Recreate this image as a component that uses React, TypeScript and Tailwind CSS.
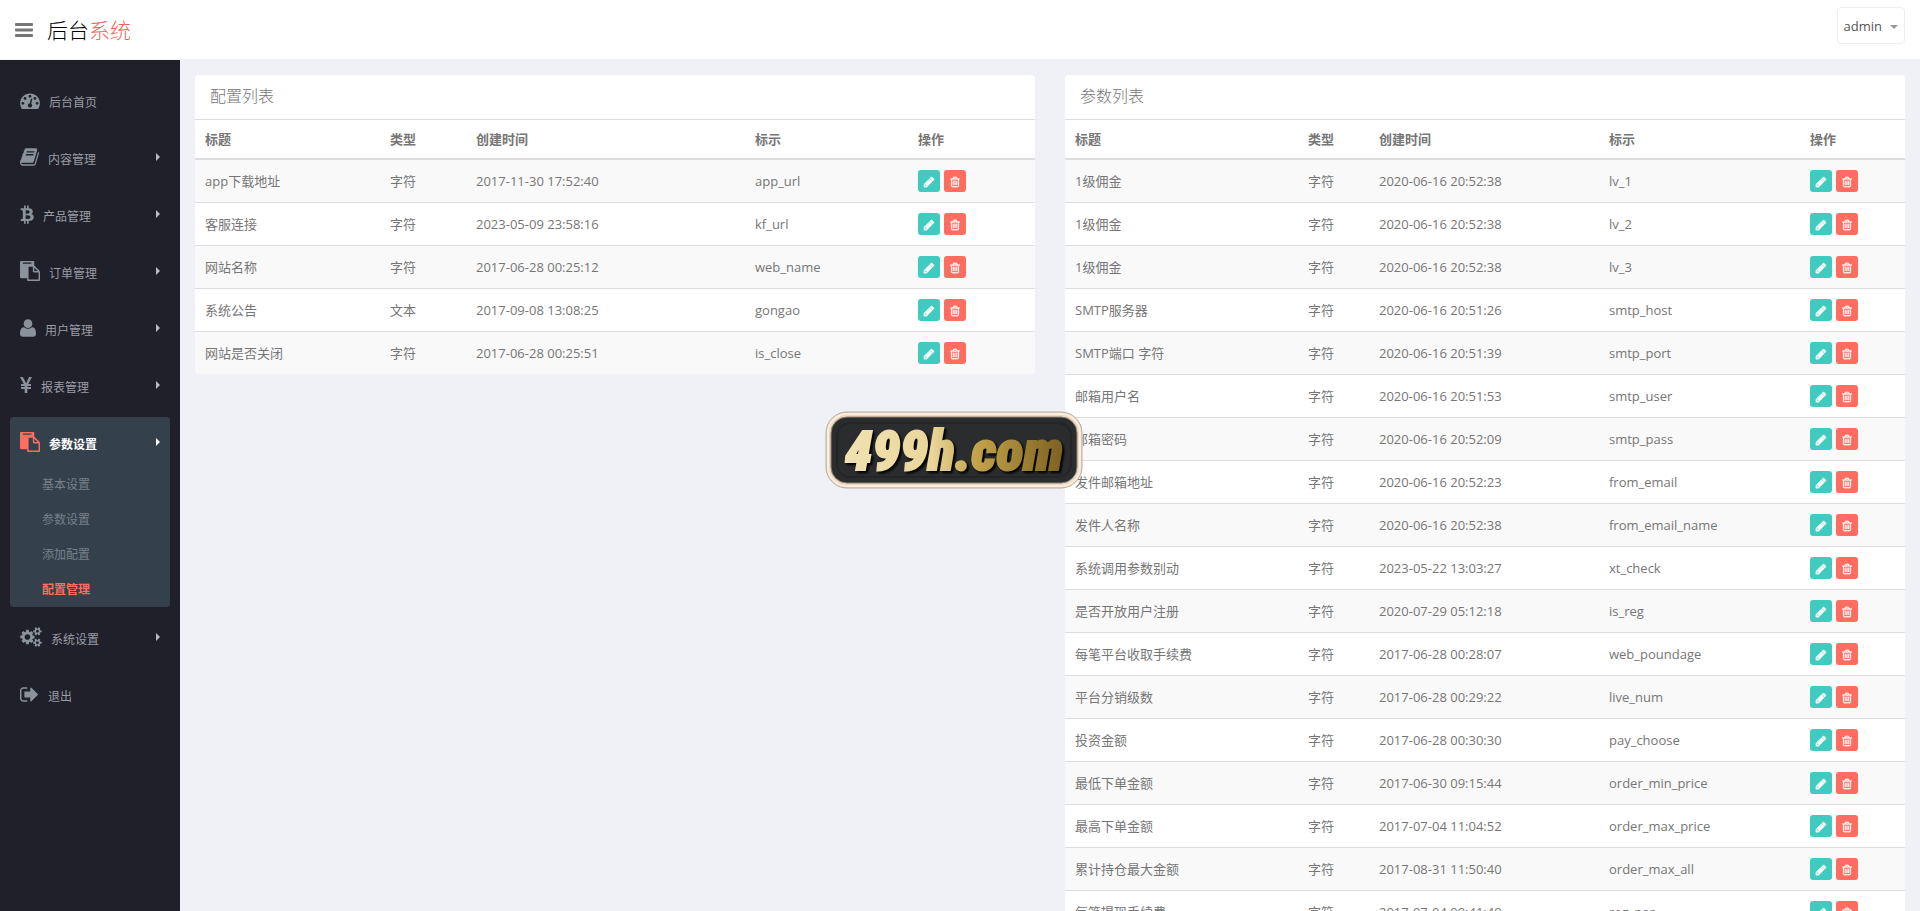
import clsx from 'clsx'

type IconDef = { box: string; path: string; size: string }

const icons: Record<string, IconDef> = {
  dashboard: {
    box: '0 128 1792 1536',
    size: 'h-[17px] w-5',
    path: 'M384 1152q0-53-37.5-90.5t-90.5-37.5-90.5 37.5-37.5 90.5 37.5 90.5 90.5 37.5 90.5-37.5 37.5-90.5zm192-448q0-53-37.5-90.5t-90.5-37.5-90.5 37.5-37.5 90.5 37.5 90.5 90.5 37.5 90.5-37.5 37.5-90.5zm428 481l101-382q6-26-7.5-48.5t-38.5-29.5-48 6.5-30 39.5l-101 382q-60 5-107 43.5t-63 98.5q-20 77 20 146t117 89 146-20 89-117q16-60-6-117t-72-91zm660-33q0-53-37.5-90.5t-90.5-37.5-90.5 37.5-37.5 90.5 37.5 90.5 90.5 37.5 90.5-37.5 37.5-90.5zm-640-640q0-53-37.5-90.5t-90.5-37.5-90.5 37.5-37.5 90.5 37.5 90.5 90.5 37.5 90.5-37.5 37.5-90.5zm448 192q0-53-37.5-90.5t-90.5-37.5-90.5 37.5-37.5 90.5 37.5 90.5 90.5 37.5 90.5-37.5 37.5-90.5zm320 448q0 261-141 483-19 29-54 29h-1402q-35 0-54-29-141-221-141-483 0-182 71-348t191-286 286-191 348-71 348 71 286 191 191 286 71 348z',
  },
  book: {
    box: '64 128 1664 1536',
    size: 'h-[18px] w-[19px]',
    path: 'M1703 478q40 57 18 129l-275 906q-19 64-76.5 107.5t-122.5 43.5h-923q-77 0-148.5-53.5t-99.5-131.5q-24-67-2-127 0-4 3-27t4-37q1-8-3-21.5t-3-19.5q2-11 8-21t16.5-23.5 16.5-23.5q23-38 45-91.5t30-91.5q3-10 .5-30t-.5-28q3-11 17-28t17-23q21-36 42-92t25-90q1-9-2.5-32t.5-28q4-13 22-30.5t22-22.5q19-26 42.5-84.5t27.5-96.5q1-8-3-25.5t-2-26.5q2-8 9-18t18-23 17-21q8-12 16.5-30.5t15-35 16-36 19.5-32 26.5-23.5 36-11.5 47.5 5.5l-1 3q38-9 51-9h761q74 0 114 56t18 130l-274 906q-36 119-71.5 153.5t-128.5 34.5h-869q-27 0-38 15-11 16-1 43 24 70 144 70h923q29 0 56-15.5t35-41.5l300-987q7-22 5-57 38 15 59 43zm-1064 2q-4 13 2 22.5t20 9.5h608q13 0 25.5-9.5t16.5-22.5l21-64q4-13-2-22.5t-20-9.5h-608q-13 0-25.5 9.5t-16.5 22.5zm-83 256q-4 13 2 22.5t20 9.5h608q13 0 25.5-9.5t16.5-22.5l21-64q4-13-2-22.5t-20-9.5h-608q-13 0-25.5 9.5t-16.5 22.5z',
  },
  btc: {
    box: '0 0 1280 1792',
    size: 'h-5 w-[14px]',
    path: 'M1167 640q18 182-131 258 117 28 175 103t45 214q-7 71-32.5 125t-64.5 89-97 58.5-121.5 34.5-145.5 15v255h-154v-251q-80 0-122-1v252h-154v-255q-18 0-54-.5t-55-.5h-200l31-183h111q50 0 58-51v-402h16q-6-1-16-1v-287q-13-68-89-68h-111v-164l212 1q64 0 97-1v-252h154v247q82-2 122-2v-245h154v252q79 7 140 22.5t113 45 82.5 78 36.5 114.5zm-215 545q0-36-15-64t-37-46-57.5-30.5-65.5-18.5-74-9-69-3-64.5 1-47.5 1v338q8 0 37 .5t48 .5 53-1.5 58.5-4 57-8.5 55.5-14 47.5-21 39.5-30 24.5-40 9.5-51zm-71-476q0-33-12.5-58.5t-30.5-42-48-28-55-16.5-61.5-8-58-2.5-54 1-39.5.5v307q5 0 34.5.5t46.5 0 50-2 55-5.5 51.5-11 48.5-18.5 37-27 27-38.5 9-51z',
  },
  paste: {
    box: '0 0 1792 1792',
    size: 'size-5',
    path: 'M768 1664h896v-640h-416q-40 0-68-28t-28-68v-416h-384v1152zm256-1440v-64q0-13-9.5-22.5t-22.5-9.5h-704q-13 0-22.5 9.5t-9.5 22.5v64q0 13 9.5 22.5t22.5 9.5h704q13 0 22.5-9.5t9.5-22.5zm256 672h299l-299-299v299zm512 128v672q0 40-28 68t-68 28h-960q-40 0-68-28t-28-68v-160h-544q-40 0-68-28t-28-68v-1344q0-40 28-68t68-28h1088q40 0 68 28t28 68v328q21 13 36 28l408 408q28 28 48 76t20 88z',
  },
  user: {
    box: '192 128 1408 1536',
    size: 'h-[18px] w-4',
    path: 'M1600 1405q0 120-73 189.5t-194 69.5h-874q-121 0-194-69.5t-73-189.5q0-53 3.5-103.5t14-109 26.5-108.5 43-97.5 62-81 85.5-53.5 111.5-20q9 0 42 21.5t74.5 48 108 48 133.5 21.5 133.5-21.5 108-48 74.5-48 42-21.5q61 0 111.5 20t85.5 53.5 62 81 43 97.5 26.5 108.5 14 109 3.5 103.5zm-320-893q0 159-112.5 271.5t-271.5 112.5-271.5-112.5-112.5-271.5 112.5-271.5 271.5-112.5 271.5 112.5 112.5 271.5z',
  },
  yen: {
    box: '0 0 1027 1408',
    size: 'h-4 w-3',
    path: 'M600 1408h-172q-13 0-22.5-9t-9.5-23v-330h-288q-13 0-22.5-9t-9.5-23v-103q0-13 9.5-22.5t22.5-9.5h288v-85h-288q-13 0-22.5-9t-9.5-23v-104q0-13 9.5-22.5t22.5-9.5h214l-321-578q-8-16 0-32 10-16 28-16h194q19 0 29 18l215 425q19 38 56 125 10-24 30.5-68t27.5-61l191-420q8-19 29-19h191q17 0 27 16 9 14 1 31l-313 579h215q13 0 22.5 9.5t9.5 22.5v104q0 14-9.5 23t-22.5 9h-290v85h290q13 0 22.5 9.5t9.5 22.5v103q0 14-9.5 23t-22.5 9h-290v330q0 13-9.5 22.5t-22.5 9.5z',
  },
  cogs: {
    box: '0 0 1920 1792',
    size: 'h-5 w-[22px]',
    path: 'M896 896q0-106-75-181t-181-75-181 75-75 181 75 181 181 75 181-75 75-181zm768 512q0-52-38-90t-90-38-90 38-38 90q0 53 37.5 90.5t90.5 37.5 90.5-37.5 37.5-90.5zm0-1024q0-52-38-90t-90-38-90 38-38 90q0 53 37.5 90.5t90.5 37.5 90.5-37.5 37.5-90.5zm-384 421v185q0 10-7 19.5t-16 10.5l-155 24q-11 35-32 76 34 48 90 115 7 11 7 20 0 12-7 19-23 30-82.5 89.5t-78.5 59.5q-11 0-21-7l-115-90q-37 19-77 31-11 108-23 155-7 24-30 24h-186q-11 0-20-7.5t-10-17.5l-23-153q-34-10-75-31l-118 89q-7 7-20 7-11 0-21-8-144-133-144-160 0-9 7-19 10-14 41-53t47-61q-23-44-35-82l-152-24q-10-1-17-9.5t-7-19.5v-185q0-10 7-19.5t16-10.5l155-24q11-35 32-76-34-48-90-115-7-11-7-20 0-12 7-20 22-30 82-89t79-59q11 0 21 7l115 90q34-18 77-32 11-108 23-154 7-24 30-24h186q11 0 20 7.5t10 17.5l23 153q34 10 75 31l118-89q8-7 20-7 11 0 21 8 144 133 144 160 0 8-7 19-12 16-42 54t-45 60q23 48 34 82l152 23q10 2 17 10.5t7 19.5zm640 533v140q0 16-149 31-12 27-30 52 51 113 51 138 0 4-4 7-122 71-124 71-8 0-46-47t-52-68q-20 2-30 2t-30-2q-14 21-52 68t-46 47q-2 0-124-71-4-3-4-7 0-25 51-138-18-25-30-52-149-15-149-31v-140q0-16 149-31 13-29 30-52-51-113-51-138 0-4 4-7 4-2 35-20t59-34 30-16q8 0 46 46.5t52 67.5q20-2 30-2t30 2q51-71 92-112l6-2q4 0 124 70 4 3 4 7 0 25-51 138 17 23 30 52 149 15 149 31zm0-1024v140q0 16-149 31-12 27-30 52 51 113 51 138 0 4-4 7-122 71-124 71-8 0-46-47t-52-68q-20 2-30 2t-30-2q-14 21-52 68t-46 47q-2 0-124-71-4-3-4-7 0-25 51-138-18-25-30-52-149-15-149-31v-140q0-16 149-31 13-29 30-52-51-113-51-138 0-4 4-7 4-2 35-20t59-34 30-16q8 0 46 46.5t52 67.5q20-2 30-2t30 2q51-71 92-112l6-2q4 0 124 70 4 3 4 7 0 25-51 138 17 23 30 52 149 15 149 31z',
  },
  signOut: {
    box: '64 256 1664 1280',
    size: 'h-[15px] w-[19px]',
    path: 'M704 1440q0 4 1 20t.5 26.5-3 23.5-10 19.5-20.5 6.5h-320q-119 0-203.5-84.5t-84.5-203.5v-704q0-119 84.5-203.5t203.5-84.5h320q13 0 22.5 9.5t9.5 22.5q0 4 1 20t.5 26.5-3 23.5-10 19.5-20.5 6.5h-320q-66 0-113 47t-47 113v704q0 66 47 113t113 47h312l11.5 1 11.5 3 8 5.5 7 9 2 13.5zm928-544q0 26-19 45l-544 544q-19 19-45 19t-45-19-19-45v-288h-448q-26 0-45-19t-19-45v-384q0-26 19-45t45-19h448v-288q0-26 19-45t45-19 45 19l544 544q19 19 19 45z',
  },
  bars: {
    box: '0 0 18 14',
    size: 'h-[14px] w-[18px]',
    path: 'M1 0h16q1 0 1 1v1q0 1-1 1H1q-1 0-1-1V1q0-1 1-1zM1 5.5h16q1 0 1 1v1q0 1-1 1H1q-1 0-1-1v-1q0-1 1-1zM1 11h16q1 0 1 1v1q0 1-1 1H1q-1 0-1-1v-1q0-1 1-1z',
  },
  pencil: {
    box: '0 0 1792 1792',
    size: 'size-3',
    path: 'M491 1536l91-91-235-235-91 91v107h128v128h107zm523-928q0-22-22-22-10 0-17 7l-542 542q-7 7-7 17 0 22 22 22 10 0 17-7l542-542q7-7 7-17zm-54-192l416 416-832 832h-416v-416zm683 96q0 53-37 90l-166 166-416-416 166-165q36-38 90-38 53 0 91 38l235 234q37 39 37 91z',
  },
  trash: {
    box: '0 0 1792 1792',
    size: 'size-3',
    path: 'M704 736v576q0 14-9 23t-23 9h-64q-14 0-23-9t-9-23v-576q0-14 9-23t23-9h64q14 0 23 9t9 23zm256 0v576q0 14-9 23t-23 9h-64q-14 0-23-9t-9-23v-576q0-14 9-23t23-9h64q14 0 23 9t9 23zm256 0v576q0 14-9 23t-23 9h-64q-14 0-23-9t-9-23v-576q0-14 9-23t23-9h64q14 0 23 9t9 23zm128 724v-948h-896v948q0 22 7 40.5t14.5 27 10.5 8.5h832q3 0 10.5-8.5t14.5-27 7-40.5zm-672-1076h448l-48-117q-7-9-17-11h-317q-10 2-17 11zm928 32v64q0 14-9 23t-23 9h-96v948q0 83-47 143.5t-113 60.5h-832q-66 0-113-58.5t-47-141.5v-952h-96q-14 0-23-9t-9-23v-64q0-14 9-23t23-9h309l70-167q15-37 54-63t79-26h320q40 0 79 26t54 63l70 167h309q14 0 23 9t9 23z',
  },
}

function Icon({ name, className }: { name: string; className?: string }) {
  const { box, path, size } = icons[name]
  return (
    <svg viewBox={box} className={clsx('shrink-0 fill-current', size, className)} aria-hidden="true">
      <path d={path} />
    </svg>
  )
}

const menu = [
  { icon: 'dashboard', label: '后台首页', leaf: true },
  { icon: 'book', label: '内容管理' },
  { icon: 'btc', label: '产品管理' },
  { icon: 'paste', label: '订单管理' },
  { icon: 'user', label: '用户管理' },
  { icon: 'yen', label: '报表管理' },
  { icon: 'paste', label: '参数设置', children: ['基本设置', '参数设置', '添加配置', '配置管理'] },
  { icon: 'cogs', label: '系统设置' },
  { icon: 'signOut', label: '退出', leaf: true },
]

const configRows = [
  ['app下载地址', '字符', '2017-11-30 17:52:40', 'app_url'],
  ['客服连接', '字符', '2023-05-09 23:58:16', 'kf_url'],
  ['网站名称', '字符', '2017-06-28 00:25:12', 'web_name'],
  ['系统公告', '文本', '2017-09-08 13:08:25', 'gongao'],
  ['网站是否关闭', '字符', '2017-06-28 00:25:51', 'is_close'],
]

const paramRows = [
  ['1级佣金', '字符', '2020-06-16 20:52:38', 'lv_1'],
  ['1级佣金', '字符', '2020-06-16 20:52:38', 'lv_2'],
  ['1级佣金', '字符', '2020-06-16 20:52:38', 'lv_3'],
  ['SMTP服务器', '字符', '2020-06-16 20:51:26', 'smtp_host'],
  ['SMTP端口 字符', '字符', '2020-06-16 20:51:39', 'smtp_port'],
  ['邮箱用户名', '字符', '2020-06-16 20:51:53', 'smtp_user'],
  ['邮箱密码', '字符', '2020-06-16 20:52:09', 'smtp_pass'],
  ['发件邮箱地址', '字符', '2020-06-16 20:52:23', 'from_email'],
  ['发件人名称', '字符', '2020-06-16 20:52:38', 'from_email_name'],
  ['系统调用参数别动', '字符', '2023-05-22 13:03:27', 'xt_check'],
  ['是否开放用户注册', '字符', '2020-07-29 05:12:18', 'is_reg'],
  ['每笔平台收取手续费', '字符', '2017-06-28 00:28:07', 'web_poundage'],
  ['平台分销级数', '字符', '2017-06-28 00:29:22', 'live_num'],
  ['投资金额', '字符', '2017-06-28 00:30:30', 'pay_choose'],
  ['最低下单金额', '字符', '2017-06-30 09:15:44', 'order_min_price'],
  ['最高下单金额', '字符', '2017-07-04 11:04:52', 'order_max_price'],
  ['累计持仓最大金额', '字符', '2017-08-31 11:50:40', 'order_max_all'],
  ['每笔提现手续费', '字符', '2017-07-04 09:41:49', 'reg_par'],
]

const columns = ['标题', '类型', '创建时间', '标示', '操作']
const configCols = ['w-[185px]', 'w-[86px]', 'w-[279px]', 'w-[163px]', 'w-[127px]']
const paramCols = ['w-[233px]', 'w-[71px]', 'w-[230px]', 'w-[201px]', 'w-[105px]']

function Panel({ title, rows, cols }: { title: string; rows: string[][]; cols: string[] }) {
  return (
    <section className="min-w-0 flex-1 overflow-hidden rounded bg-white">
      <h2 className="border-b border-[#ddd] px-[15px] pb-[11px] pt-[9px] text-base font-light leading-6">{title}</h2>
      <table className="w-full table-fixed text-left text-[13px] leading-[18px]">
        <colgroup>
          {cols.map((width, i) => (
            <col key={i} className={width} />
          ))}
        </colgroup>
        <thead>
          <tr className="h-[39px] border-b-2 border-[#ddd]">
            {columns.map((name) => (
              <th key={name} className="px-2.5 font-bold">{name}</th>
            ))}
          </tr>
        </thead>
        <tbody>
          {rows.map((row, i) => (
            <tr key={i} className="h-[43px] border-b border-[#ddd] last:border-b-0 odd:bg-[#f9f9f9]">
              {row.map((cell, j) => (
                <td key={j} className="px-2.5">{cell}</td>
              ))}
              <td className="px-2.5">
                <div className="flex gap-1 text-white">
                  <button type="button" aria-label="编辑" className="flex size-[22px] items-center justify-center rounded-[3px] bg-[#41cac0] pt-0.5">
                    <Icon name="pencil" className="stroke-current stroke-[60]" />
                  </button>
                  <button type="button" aria-label="删除" className="flex size-[22px] items-center justify-center rounded-[3px] bg-[#ff6c60] pt-0.5">
                    <Icon name="trash" className="stroke-current stroke-[40]" />
                  </button>
                </div>
              </td>
            </tr>
          ))}
        </tbody>
      </table>
    </section>
  )
}

function Sidebar() {
  return (
    <nav className="flex w-[180px] shrink-0 flex-col gap-[5px] bg-[#20202a] px-2.5 pt-[15px] text-xs text-[#9a9da3]">
      {menu.map(({ icon, label, leaf, children }) => (
        <div key={label} className={clsx('rounded', children && 'bg-[#35404d]')}>
          <a href="#" className={clsx('flex h-[52px] items-center gap-[9px] px-2.5 pb-0.5', children && 'font-bold text-white')}>
            <Icon name={icon} className={children ? 'text-[#ff6c60]' : 'text-[#8b929b]'} />
            <span className="flex-1 pt-1.5">{label}</span>
            {!leaf && (
              <svg viewBox="0 0 4 8" className="h-2 w-1 fill-current text-[#b9bcc0]" aria-hidden="true">
                <path d="M0 0l4 4-4 4z" className={children ? 'fill-white' : ''} />
              </svg>
            )}
          </a>
          {children && (
            <ul className="flex flex-col gap-[17px] pb-2 pl-8 pt-[7px] leading-[18px] text-[#75808a]">
              {children.map((child) => (
                <li key={child}>
                  <a href="#" className={child === '配置管理' ? 'font-bold text-[#ff6c60]' : ''}>{child}</a>
                </li>
              ))}
            </ul>
          )}
        </div>
      ))}
    </nav>
  )
}

function Watermark() {
  return (
    <svg viewBox="0 0 258 78" className="pointer-events-none fixed left-1/2 top-1/2 ml-[-135px] mt-[-45px] h-[78px] w-[258px]" role="img" aria-label="499h.com">
      <defs>
        <linearGradient id="gold" x1="0" x2="1" y1="0" y2="0">
          <stop offset="0" stopColor="#f1e2b3" />
          <stop offset="0.4" stopColor="#e9d699" />
          <stop offset="0.6" stopColor="#c3a34b" />
          <stop offset="1" stopColor="#7d6120" />
        </linearGradient>
      </defs>
      <rect x="1" y="1" width="256" height="76" rx="21" fill="#ecd9c3" stroke="#b9ab9b" strokeWidth="1" />
      <rect x="3" y="3" width="252" height="72" rx="19" fill="none" stroke="#fbeddd" strokeWidth="2" />
      <rect x="6" y="6" width="246" height="66" rx="16" fill="#2b2c2e" stroke="#8f8170" strokeWidth="1" />
      <rect x="12" y="12" width="234" height="54" rx="13" fill="none" stroke="#242527" strokeWidth="2" />
      <text
        x="129"
        y="59"
        textAnchor="middle"
        className="font-['Roboto_Condensed',Roboto,sans-serif] text-[56px] font-black italic [filter:drop-shadow(2px_2px_1px_#000)]"
        fill="url(#gold)"
        stroke="url(#gold)"
        strokeWidth="2"
      >
        499h.com
      </text>
    </svg>
  )
}

export default function App() {
  return (
    <div className="flex h-screen flex-col overflow-hidden bg-[#f0f1f6] font-['Open_Sans','Noto_Sans_CJK_SC',sans-serif] text-[#767676]">
      <header className="flex h-[60px] shrink-0 items-center justify-between border-b border-[#f0f1f6] bg-white px-[15px]">
        <div className="flex items-center gap-[14px]">
          <button type="button" aria-label="菜单">
            <Icon name="bars" />
          </button>
          <a href="#" className="text-[21px] font-light leading-8 text-black">
            后台<span className="text-[#f0665b]">系统</span>
          </a>
        </div>
        <button type="button" className="mb-2 flex h-[37px] items-center gap-2 rounded border border-[#eee] px-1.5 pt-0.5 text-[13px] text-[#555]">
          admin
          <svg viewBox="0 0 8 4" className="h-1 w-2 fill-[#999]" aria-hidden="true">
            <path d="M0 0h8L4 4z" />
          </svg>
        </button>
      </header>
      <div className="flex min-h-0 flex-1">
        <Sidebar />
        <main className="flex flex-1 items-start gap-[30px] overflow-y-auto p-[15px] [scrollbar-width:none]">
          <Panel title="配置列表" rows={configRows} cols={configCols} />
          <Panel title="参数列表" rows={paramRows} cols={paramCols} />
        </main>
      </div>
      <Watermark />
    </div>
  )
}
